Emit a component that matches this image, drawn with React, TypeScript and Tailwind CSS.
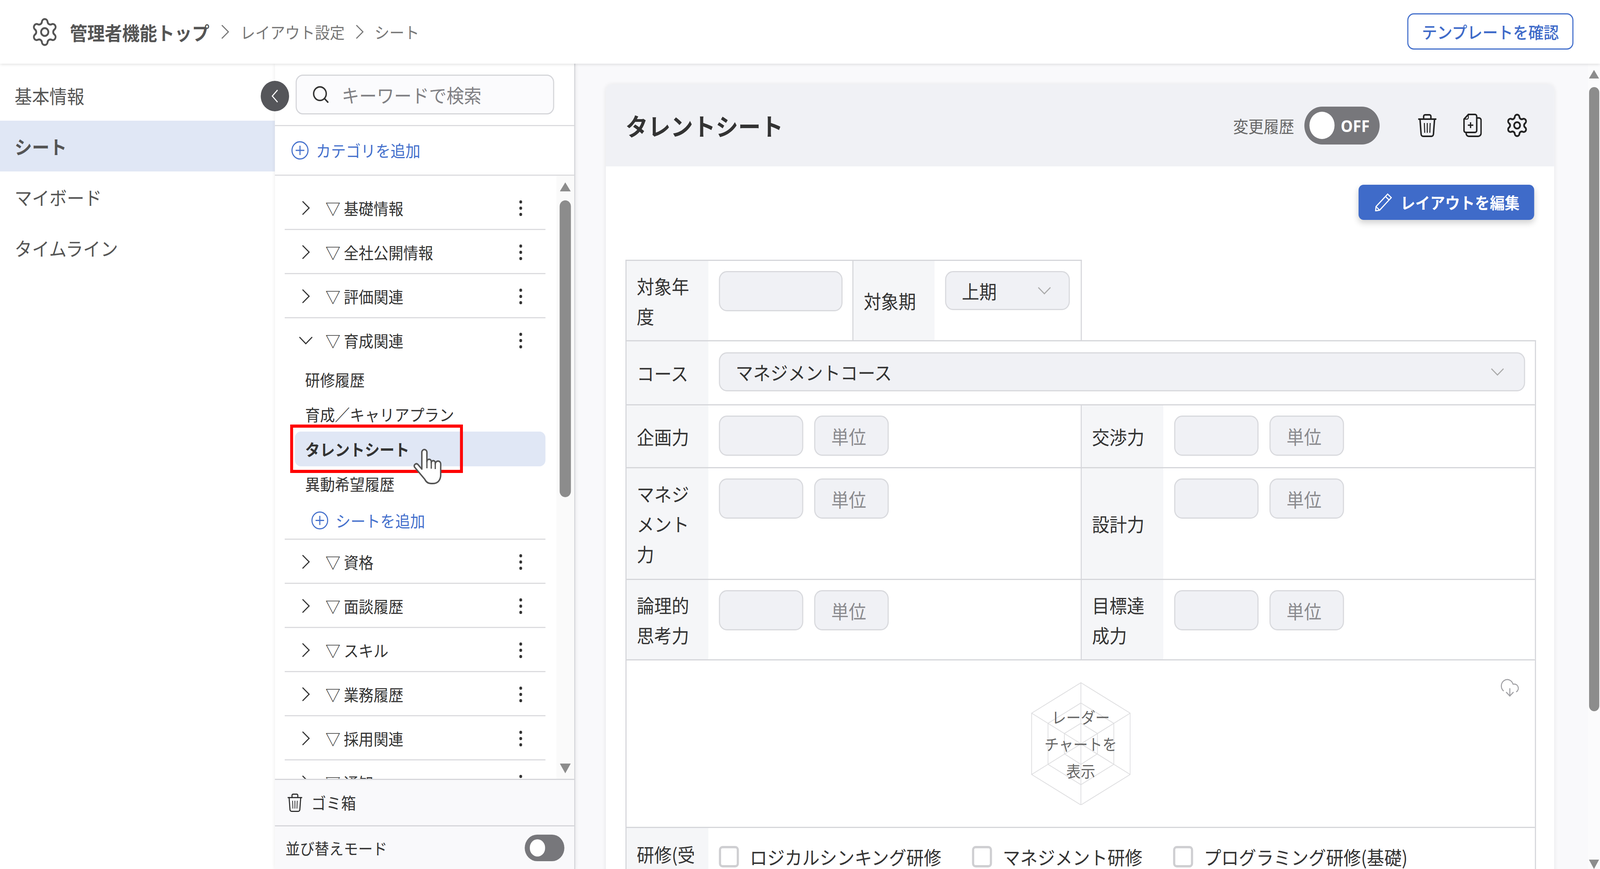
import type { ReactNode } from 'react';
import { CloudDownload, Search, Settings } from 'lucide-react';

const FONT = "font-['Noto_Sans_CJK_JP','Noto_Sans',sans-serif]";

function ChevronRight({ className = 'w-[22px] h-[37px]', stroke = '#333' }: { className?: string; stroke?: string }) {
  return (
    <svg viewBox="0 0 22 37" className={className} fill="none" stroke={stroke} strokeWidth="3">
      <path d="M2 1.5 20 18.5 2 35.5" />
    </svg>
  );
}

function ChevronDown({ className, stroke = '#333' }: { className: string; stroke?: string }) {
  return (
    <svg viewBox="0 0 38 21" className={className} fill="none" stroke={stroke} strokeWidth="3">
      <path d="M1.5 2 19 19 36.5 2" />
    </svg>
  );
}

function Kebab() {
  return (
    <svg viewBox="0 0 8 40" className="w-[8px] h-[40px]" fill="#333">
      <circle cx="4" cy="4" r="4" />
      <circle cx="4" cy="20" r="4" />
      <circle cx="4" cy="36" r="4" />
    </svg>
  );
}

function PlusCircle({ className }: { className: string }) {
  return (
    <svg viewBox="0 0 48 48" className={className} fill="none" stroke="#4470cc" strokeWidth="3">
      <circle cx="24" cy="24" r="22" />
      <path d="M24 12v24M12 24h24" />
    </svg>
  );
}

function TrashIcon({ className, strokeWidth = 4 }: { className: string; strokeWidth?: number }) {
  return (
    <svg viewBox="0 0 54 60" className={className} fill="none" stroke="#222" strokeWidth={strokeWidth}>
      <path d="M2 14h50M17 14V7a4 4 0 0 1 4-4h12a4 4 0 0 1 4 4v7" />
      <path d="M7 14l3 38a6 6 0 0 0 6 6h22a6 6 0 0 0 6-6l3-38" />
      <path d="M19 24l1 25M27 24v25M35 24l-1 25" strokeWidth={strokeWidth * 0.7} />
    </svg>
  );
}

function CopyPlusIcon() {
  return (
    <svg viewBox="0 0 51 60" className="w-[51px] h-[60px]" fill="none" stroke="#222" strokeWidth="4">
      <path d="M14 2h18a5 5 0 0 1 5 5v36a5 5 0 0 1-5 5H7a5 5 0 0 1-5-5V14z" />
      <path d="M14 2v8a4 4 0 0 1-4 4H2" strokeWidth="2.5" />
      <path d="M37 11h6a6 6 0 0 1 6 6v33a8 8 0 0 1-8 8H15a7 7 0 0 1-7-7v-3" />
      <path d="M20 22v15M12.5 29.5h15" strokeWidth="3.5" />
    </svg>
  );
}

function PencilIcon() {
  return (
    <svg viewBox="0 0 47 46" className="w-[47px] h-[46px]" fill="none" stroke="#fff" strokeWidth="3">
      <path d="M35 2l10 9L13 43l-11 2 1-11z" />
      <path d="M29 8l10 9M3 34l10 9" />
    </svg>
  );
}

function HandCursor() {
  return (
    <svg viewBox="0 0 78 91" className="w-[78px] h-[91px]" fill="#fff" stroke="#555" strokeWidth="4" strokeLinejoin="round">
      <path d="M24 52V9a7 7 0 0 1 14 0v24a6 6 0 0 1 12 0v3a5.500 5.500 0 0 1 11 0v3a7.500 7.500 0 0 1 15 0v27c0 14-8 23-21 23H49c-8 0-13-3-17-11L4 47c-3-6 4-11 9-7z" />
      <path d="M38 33v17M50 36v15M61 39v13" fill="none" strokeWidth="3.500" />
    </svg>
  );
}

function ArrowUp({ className }: { className: string }) {
  return <div className={`${className} bg-[#8c8c8c] [clip-path:polygon(50%_0,100%_100%,0_100%)]`} />;
}

function ArrowDown({ className }: { className: string }) {
  return <div className={`${className} bg-[#8c8c8c] [clip-path:polygon(0_0,100%_0,50%_100%)]`} />;
}

function CategoryRow({ name, open = false }: { name: string; open?: boolean }) {
  return (
    <div className="h-[113px] shrink-0 flex items-center pl-[38px] pr-[64px] text-[41px] text-[#333]">
      <span className="w-[40px] flex justify-center shrink-0">
        {open ? <ChevronDown className="w-[38px] h-[21px]" /> : <ChevronRight />}
      </span>
      <span className="ml-[34px] flex-1 whitespace-pre">▽ {name}</span>
      <Kebab />
    </div>
  );
}

function Divider() {
  return <div className="h-[3px] shrink-0 bg-[#dcdcdf] -mt-[3px] relative" />;
}

const LABEL = 'shrink-0 bg-[#f5f6f8] px-[28px] flex items-center text-[48px] leading-[77px] text-[#333]';
const FIELD = 'bg-[#f0f1f5] border-[3px] border-[#d8d9dd] rounded-[22px]';

function NumberField() {
  return (
    <div className="flex gap-[30px]">
      <div className={`${FIELD} h-[103px] w-[232px]`} />
      <div className={`${FIELD} h-[103px] w-[205px] flex items-center pl-[44px] text-[48px] text-[#8a8a8e]`}>単位</div>
    </div>
  );
}

function MetricRow({ left, right, height }: { left: string; right: string; height: string }) {
  return (
    <div className={`flex ${height} border-b-[3px] border-[#d5d6da]`}>
      <div className={`${LABEL} w-[225px]`}>{left}</div>
      <div className="w-[1027px] pl-[29px] pt-[26px] border-r-[3px] border-[#d5d6da]">
        <NumberField />
      </div>
      <div className={`${LABEL} w-[224px]`}>{right}</div>
      <div className="pl-[30px] pt-[26px]">
        <NumberField />
      </div>
    </div>
  );
}

function Check({ children }: { children: ReactNode }) {
  return (
    <div className="flex items-center gap-[30px] text-[48px] text-[#333] whitespace-nowrap">
      <span className="w-[55px] h-[55px] border-[6px] border-[#cfcfd2] rounded-[10px] bg-white shrink-0" />
      {children}
    </div>
  );
}

export default function App() {
  return (
    <div className="w-screen h-screen overflow-hidden">
      <div className={`${FONT} w-[4400px] h-[2225px] origin-top-left scale-x-[0.93091] overflow-hidden flex flex-col bg-white`}>
        <header className="h-[163px] shrink-0 bg-white flex items-center pl-[83px] pr-[73px] relative z-20 shadow-[0_2px_8px_rgba(0,0,0,0.12)]">
          <Settings className="w-[80px] h-[80px] text-[#555]" strokeWidth={1.5} />
          <span className="ml-[29px] text-[48px] font-bold text-[#555]">管理者機能トップ</span>
          <ChevronRight className="w-[22px] h-[37px] ml-[32px]" stroke="#777" />
          <span className="ml-[31px] text-[41px] text-[#777]">レイアウト設定</span>
          <ChevronRight className="w-[22px] h-[37px] ml-[30px]" stroke="#777" />
          <span className="ml-[30px] text-[41px] text-[#777]">シート</span>
          <button className="ml-auto w-[457px] h-[93px] -mt-[2px] border-[3px] border-[#4470cc] rounded-[18px] bg-white text-[42px] font-medium text-[#3f6bc9]">
            テンプレートを確認
          </button>
        </header>

        <div className="flex-1 flex min-h-0">
          <nav className="w-[756px] shrink-0 pt-[16px] text-[48px] text-[#555]">
            <div className="h-[130px] pl-[40px] flex items-center">基本情報</div>
            <div className="h-[130px] pl-[40px] flex items-center bg-[#e0e7f5] font-bold">シート</div>
            <div className="h-[130px] pl-[40px] flex items-center">マイボード</div>
            <div className="h-[130px] pl-[40px] flex items-center">タイムライン</div>
          </nav>

          <aside className="w-[826px] shrink-0 flex flex-col relative border-r-[3px] border-[#d5d6da] shadow-[0_0_10px_rgba(0,0,0,0.1)] bg-white z-10">
            <button className="absolute left-[-39px] top-[44px] w-[78px] h-[78px] rounded-full bg-[#55565a] flex items-center justify-center">
              <svg viewBox="0 0 22 38" className="w-[20px] h-[38px]" fill="none" stroke="#fff" strokeWidth="3">
                <path d="M19 2 3 19l16 17" />
              </svg>
            </button>
            <div className="h-[160px] shrink-0 pl-[57px] pt-[28px] border-b-[3px] border-[#dcdcdf]">
              <div className="w-[711px] h-[102px] rounded-[20px] border-[3px] border-[#d5d6da] bg-[#fbfbfd] flex items-center pl-[40px] text-[48px] text-[#808084]">
                <Search className="w-[52px] h-[52px] text-[#333]" strokeWidth={1.8} />
                <span className="ml-[32px]">キーワードで検索</span>
              </div>
            </div>
            <div className="h-[127px] shrink-0 pl-[45px] flex items-center border-b-[3px] border-[#dcdcdf] text-[41px] text-[#4470cc]">
              <PlusCircle className="w-[48px] h-[48px]" />
              <span className="ml-[20px]">カテゴリを追加</span>
            </div>

            <div className="flex-1 flex min-h-0">
              <div className="flex-1 overflow-hidden pl-[27px] pr-[30px] pt-[26px] flex flex-col">
                <CategoryRow name="基礎情報" />
                <Divider />
                <CategoryRow name="全社公開情報" />
                <Divider />
                <CategoryRow name="評価関連" />
                <Divider />
                <CategoryRow name="育成関連" open />
                <div className="shrink-0 text-[41px] text-[#333]">
                  <div className="h-[89px] pl-[56px] -mt-[1px] flex items-center">研修履歴</div>
                  <div className="h-[89px] pl-[56px] flex items-center">育成／キャリアプラン</div>
                  <div className="h-[89px] ml-[28px] pl-[28px] flex items-center rounded-[16px] bg-[#e0e7f5] font-bold relative">
                    タレントシート
                    <div className="absolute left-[-13px] top-[-18px] w-[475px] h-[124px] border-[8px] border-[#ff0000]" />
                    <div className="absolute left-[325px] top-[44px]">
                      <HandCursor />
                    </div>
                  </div>
                  <div className="h-[89px] pl-[56px] flex items-center">異動希望履歴</div>
                  <div className="h-[99px] pl-[73px] flex items-center text-[#4470cc]">
                    <PlusCircle className="w-[47px] h-[47px]" />
                    <span className="ml-[20px]">シートを追加</span>
                  </div>
                </div>
                <Divider />
                <CategoryRow name="資格" />
                <Divider />
                <CategoryRow name="面談履歴" />
                <Divider />
                <CategoryRow name="スキル" />
                <Divider />
                <CategoryRow name="業務履歴" />
                <Divider />
                <CategoryRow name="採用関連" />
                <Divider />
                <CategoryRow name="通知" />
              </div>
              <div className="w-[49px] shrink-0 bg-[#fafafa] flex flex-col items-center pt-[17px] pb-[14px]">
                <ArrowUp className="w-[30px] h-[23px]" />
                <div className="w-[31px] h-[760px] mt-[23px] rounded-full bg-[#8c8c8c]" />
                <ArrowDown className="w-[30px] h-[25px] mt-auto" />
              </div>
            </div>

            <div className="h-[119px] shrink-0 bg-[#f9f9fb] border-t-[3px] border-[#d5d6da] flex items-center pl-[33px] text-[41px] text-[#333]">
              <TrashIcon className="w-[44px] h-[48px]" strokeWidth={3.5} />
              <span className="ml-[23px]">ゴミ箱</span>
            </div>
            <div className="h-[112px] shrink-0 bg-[#f9f9fb] border-t-[3px] border-[#d5d6da] flex items-center justify-between pl-[29px] pr-[27px] text-[40px] text-[#333]">
              <span>並び替えモード</span>
              <div className="w-[109px] h-[68px] rounded-full bg-[#77777b] flex items-center pl-[14px]">
                <div className="w-[42px] h-[44px] rounded-full bg-white" />
              </div>
            </div>
          </aside>

          <main className="flex-1 min-w-0 flex bg-[#f9f9fb]">
            <div className="flex-1 min-w-0 pl-[84px] pr-[93px] pt-[53px]">
              <section className="h-[2100px] rounded-t-[18px] bg-white shadow-[0_0_12px_rgba(0,0,0,0.08)]">
                <div className="h-[210px] rounded-t-[18px] bg-[#f0f1f5] flex items-center pl-[54px] pr-[69px]">
                  <h1 className="text-[62px] font-bold text-[#333]">タレントシート</h1>
                  <span className="ml-auto text-[42px] text-[#666]">変更履歴</span>
                  <div className="ml-[28px] w-[207px] h-[97px] rounded-full bg-[#77777b] flex items-center pl-[14px] text-[42px] font-bold text-white">
                    <div className="w-[69px] h-[70px] rounded-full bg-white" />
                    <span className="ml-[17px] font-['Noto_Sans',sans-serif]">OFF</span>
                  </div>
                  <div className="ml-[104px]">
                    <TrashIcon className="w-[54px] h-[60px]" />
                  </div>
                  <div className="ml-[72px]">
                    <CopyPlusIcon />
                  </div>
                  <Settings className="ml-[64px] w-[66px] h-[66px] text-[#222]" strokeWidth={1.7} />
                </div>

                <div className="pl-[54px] pr-[50px]">
                  <div className="flex justify-end pr-[5px] pt-[47px]">
                    <button className="w-[483px] h-[90px] rounded-[14px] bg-[#3f6bc9] flex items-center pl-[45px] gap-[23px] text-[41px] font-bold text-white shadow-[0_8px_16px_rgba(0,0,0,0.18)]">
                      <PencilIcon />
                      レイアウトを編集
                    </button>
                  </div>

                  <div className="mt-[102px] w-[1255px] h-[206px] flex border-[3px] border-b-0 border-[#d5d6da]">
                    <div className={`${LABEL} w-[225px]`}>対象年度</div>
                    <div className="w-[399px] pl-[29px] pt-[26px] border-r-[3px] border-[#d5d6da]">
                      <div className={`${FIELD} w-[340px] h-[103px]`} />
                    </div>
                    <div className={`${LABEL} w-[223px]`}>対象期</div>
                    <div className="pl-[29px] pt-[26px]">
                      <div className={`${FIELD} w-[343px] h-[100px] flex items-center justify-between pl-[43px] pr-[48px] text-[48px] text-[#333]`}>
                        上期
                        <ChevronDown className="w-[38px] h-[20px]" stroke="#aaa" />
                      </div>
                    </div>
                  </div>

                  <div className="border-[3px] border-b-0 border-[#d5d6da]">
                    <div className="flex h-[164px] border-b-[3px] border-[#d5d6da]">
                      <div className={`${LABEL} w-[225px]`}>コース</div>
                      <div className="flex-1 pl-[29px] pr-[27px] pt-[28px]">
                        <div className={`${FIELD} h-[100px] flex items-center justify-between pl-[43px] pr-[54px] text-[48px] text-[#333]`}>
                          マネジメントコース
                          <ChevronDown className="w-[38px] h-[20px]" stroke="#aaa" />
                        </div>
                      </div>
                    </div>
                    <MetricRow left="企画力" right="交渉力" height="h-[161px]" />
                    <MetricRow left="マネジメント力" right="設計力" height="h-[286px]" />
                    <MetricRow left="論理的思考力" right="目標達成力" height="h-[206px]" />

                    <div className="h-[429px] border-b-[3px] border-[#d5d6da] relative flex items-center justify-center">
                      <svg viewBox="0 0 273 314" className="w-[273px] h-[314px]" fill="none" stroke="#dddddf" strokeWidth="2">
                        <path d="M136.500 1 272 79v157l-135.500 78L1 236V79z" />
                        <path d="M136.500 53 227 105v105l-90.500 52L46 210V105z" />
                        <path d="M136.500 105 182 131v52l-45.500 27L91 183v-52z" />
                        <path d="M136.500 1v312M1 79l271 157M272 79 1 236" />
                      </svg>
                      <div className="absolute inset-0 flex flex-col items-center justify-center text-[40px] leading-[69px] text-[#666]">
                        <span>レーダー</span>
                        <span>チャートを</span>
                        <span>表示</span>
                      </div>
                      <CloudDownload className="absolute right-[41px] top-[42px] w-[56px] h-[56px] text-[#a0a0a4]" strokeWidth={1.2} />
                    </div>

                    <div className="flex h-[200px]">
                      <div className={`${LABEL} w-[225px] !items-start pt-[28px]`}>研修(受講)</div>
                      <div className="pl-[29px] pt-[37px] flex gap-[84px] h-fit">
                        <Check>ロジカルシンキング研修</Check>
                        <Check>マネジメント研修</Check>
                        <Check>プログラミング研修(基礎)</Check>
                      </div>
                    </div>
                  </div>
                </div>
              </section>
            </div>
            <div className="w-[33px] shrink-0 bg-[#fbfbfc] flex flex-col items-center pt-[16px] overflow-hidden">
              <ArrowUp className="w-[28px] h-[24px]" />
              <div className="w-[28px] h-[1598px] mt-[22px] shrink-0 rounded-full bg-[#8c8c8c]" />
              <ArrowDown className="w-[28px] h-[24px] mt-[380px] shrink-0" />
            </div>
          </main>
        </div>
      </div>
    </div>
  );
}
